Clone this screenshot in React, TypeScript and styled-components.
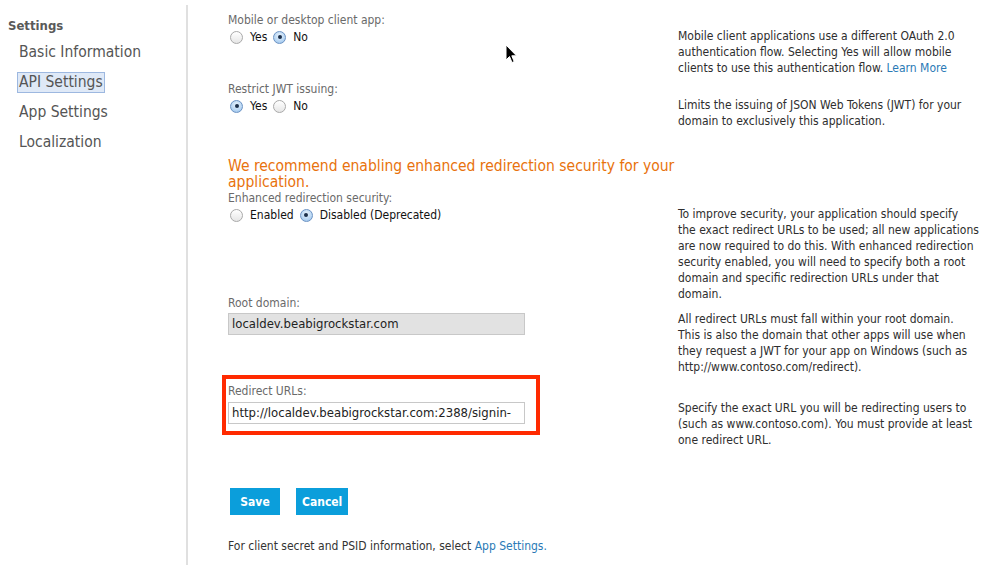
import React from "react";
import styled, { createGlobalStyle } from "styled-components";

const GlobalStyle = createGlobalStyle`
  html, body { margin: 0; padding: 0; background: #fff; }
  body {
    font-family: "DejaVu Sans Condensed", "DejaVu Sans", sans-serif;
    font-stretch: condensed;
    color: #333;
  }
`;

const Page = styled.div`
  position: relative;
  display: flex;
  width: 984px;
  height: 565px;
  overflow: hidden;
`;

const Sidebar = styled.nav`
  flex: none;
  box-sizing: border-box;
  width: 188px;
  margin-top: 5px;
  padding-top: 13px;
  border-right: 2px solid #e0e0e0;
`;

const SectionTitle = styled.div`
  padding-left: 8px;
  font-size: 13px;
  line-height: 16px;
  font-weight: bold;
  color: #595959;
`;

const NavList = styled.ul`
  list-style: none;
  margin: 3px 0 0;
  padding: 0 0 0 18px;
`;

const NavItem = styled.li`
  height: 30px;
  display: flex;
  align-items: center;
`;

const NavLink = styled.span<{ $active?: boolean }>`
  display: inline-block;
  padding: 0 1px;
  margin-left: -1px;
  font-size: 15.5px;
  line-height: 19px;
  color: #555;
  border: 1px solid ${(p) => (p.$active ? "#9db8e0" : "transparent")};
  background: ${(p) => (p.$active ? "#dfe9f7" : "transparent")};
`;

const Main = styled.main`
  flex: 1;
  padding: 12px 2px 0 40px;
`;

const Row = styled.section<{ $gap: number }>`
  display: grid;
  grid-template-columns: 450px 1fr;
  align-items: start;
  margin-top: ${(p) => p.$gap}px;
`;

const Field = styled.div`
  display: flex;
  flex-direction: column;
  align-items: flex-start;
`;

const Label = styled.div`
  font-size: 12px;
  line-height: 16px;
  color: #6a6a6a;
`;

const RadioGroup = styled.div`
  display: flex;
  align-items: center;
  height: 16px;
  margin-top: 1px;
  margin-left: 2px;
  gap: 6px;
`;

const RadioOption = styled.label`
  display: flex;
  align-items: center;
  gap: 7px;
  font-size: 12px;
  color: #111;
`;

const RadioDot = styled.span<{ $checked?: boolean }>`
  position: relative;
  box-sizing: border-box;
  width: 13px;
  height: 13px;
  border-radius: 50%;
  border: 1px solid ${(p) => (p.$checked ? "#6c93c4" : "#a9a9a9")};
  background: ${(p) =>
    p.$checked
      ? "radial-gradient(circle at 50% 35%, #e8f3fd 0%, #b8d6f3 60%, #8fbbe8 100%)"
      : "linear-gradient(#ffffff, #e6e6e6)"};
  &::after {
    content: "";
    display: ${(p) => (p.$checked ? "block" : "none")};
    position: absolute;
    left: 50%;
    top: 50%;
    width: 4px;
    height: 4px;
    margin: -2px 0 0 -2px;
    border-radius: 50%;
    background: #1b2f4a;
  }
`;

const Desc = styled.p<{ $top: number; $width?: number }>`
  margin: ${(p) => p.$top}px 0 0;
  max-width: ${(p) => (p.$width ? `${p.$width}px` : "none")};
  font-size: 12px;
  line-height: 16px;
  color: #2e2e2e;
`;

const Link = styled.a`
  color: #2a7ab6;
  text-decoration: none;
`;

const Warning = styled.h2`
  grid-column: 1 / -1;
  max-width: 470px;
  margin: 0;
  font-size: 15.5px;
  line-height: 16px;
  font-weight: normal;
  color: #e8720c;
`;

const TextInput = styled.input<{ $disabled?: boolean }>`
  box-sizing: border-box;
  width: 297px;
  height: 22px;
  margin: 2px 0 0;
  padding: 0 3px;
  border: 1px solid #c8c8c8;
  background: ${(p) => (p.$disabled ? "#e2e2e2" : "#fff")};
  font-family: "DejaVu Sans", sans-serif;
  font-stretch: normal;
  font-size: 11.7px;
  color: #222;
  outline: none;
`;

const Highlight = styled.div`
  margin-left: -6px;
  padding: 4px 11px 7px 2px;
  border: 4px solid #ff2a00;
  ${TextInput} { margin-top: 3px; }
`;

const Actions = styled.div`
  display: flex;
  gap: 16px;
  margin: 40px 0 0 2px;
`;

const Button = styled.button`
  min-width: 50px;
  height: 27px;
  padding: 0 6px;
  border: none;
  background: #0b9edb;
  color: #fff;
  font-family: "DejaVu Sans Condensed", "DejaVu Sans", sans-serif;
  font-stretch: condensed;
  font-weight: bold;
  font-size: 12px;
`;

const Footer = styled.p`
  margin: 23px 0 0;
  font-size: 12px;
  line-height: 16px;
  color: #333;
`;

const Cursor = styled.svg`
  position: absolute;
  left: 505px;
  top: 44px;
`;

function Radio({ label, checked }: { label: string; checked?: boolean }) {
  return (
    <RadioOption>
      <RadioDot $checked={checked} />
      {label}
    </RadioOption>
  );
}

export default function App() {
  return (
    <Page>
      <GlobalStyle />
      <Sidebar>
        <SectionTitle>Settings</SectionTitle>
        <NavList>
          <NavItem><NavLink>Basic Information</NavLink></NavItem>
          <NavItem><NavLink $active>API Settings</NavLink></NavItem>
          <NavItem><NavLink>App Settings</NavLink></NavItem>
          <NavItem><NavLink>Localization</NavLink></NavItem>
        </NavList>
      </Sidebar>
      <Main>
        <Row $gap={0}>
          <Field>
            <Label>Mobile or desktop client app:</Label>
            <RadioGroup>
              <Radio label="Yes" />
              <Radio label="No" checked />
            </RadioGroup>
          </Field>
          <Desc $top={16}>
            Mobile client applications use a different OAuth 2.0 authentication flow. Selecting Yes will
            allow mobile clients to use this authentication flow. <Link>Learn More</Link>
          </Desc>
        </Row>
        <Row $gap={5}>
          <Field>
            <Label>Restrict JWT issuing:</Label>
            <RadioGroup>
              <Radio label="Yes" checked />
              <Radio label="No" />
            </RadioGroup>
          </Field>
          <Desc $top={16}>
            Limits the issuing of JSON Web Tokens (JWT) for your domain to exclusively this application.
          </Desc>
        </Row>
        <Row $gap={29}>
          <Warning>We recommend enabling enhanced redirection security for your application.</Warning>
          <Field>
            <Label>Enhanced redirection security:</Label>
            <RadioGroup>
              <Radio label="Enabled" />
              <Radio label="Disabled (Deprecated)" checked />
            </RadioGroup>
          </Field>
          <Desc $top={16} $width={301}>
            To improve security, your application should specify the exact redirect URLs to be used; all
            new applications are now required to do this. With enhanced redirection security enabled, you
            will need to specify both a root domain and specific redirection URLs under that domain.
          </Desc>
        </Row>
        <Row $gap={-7}>
          <Field>
            <Label>Root domain:</Label>
            <TextInput $disabled readOnly value="localdev.beabigrockstar.com" />
          </Field>
          <Desc $top={16} $width={300}>
            All redirect URLs must fall within your root domain. This is also the domain that other apps
            will use when they request a JWT for your app on Windows (such as
            http://www.contoso.com/redirect).
          </Desc>
        </Row>
        <Row $gap={0}>
          <Field>
            <Highlight>
              <Label>Redirect URLs:</Label>
              <TextInput readOnly value="http://localdev.beabigrockstar.com:2388/signin-" />
            </Highlight>
          </Field>
          <Desc $top={25}>
            Specify the exact URL you will be redirecting users to (such as www.contoso.com). You must
            provide at least one redirect URL.
          </Desc>
        </Row>
        <Actions>
          <Button>Save</Button>
          <Button>Cancel</Button>
        </Actions>
        <Footer>
          For client secret and PSID information, select <Link>App Settings.</Link>
        </Footer>
      </Main>
      <Cursor width="13" height="20" viewBox="0 0 13 20">
        <path
          d="M1 1 L1 16 L4.5 12.5 L7 18.5 L9.2 17.6 L6.8 11.8 L11.5 11.8 Z"
          fill="#000"
          stroke="#fff"
          strokeWidth="1"
          strokeLinejoin="round"
        />
      </Cursor>
    </Page>
  );
}
